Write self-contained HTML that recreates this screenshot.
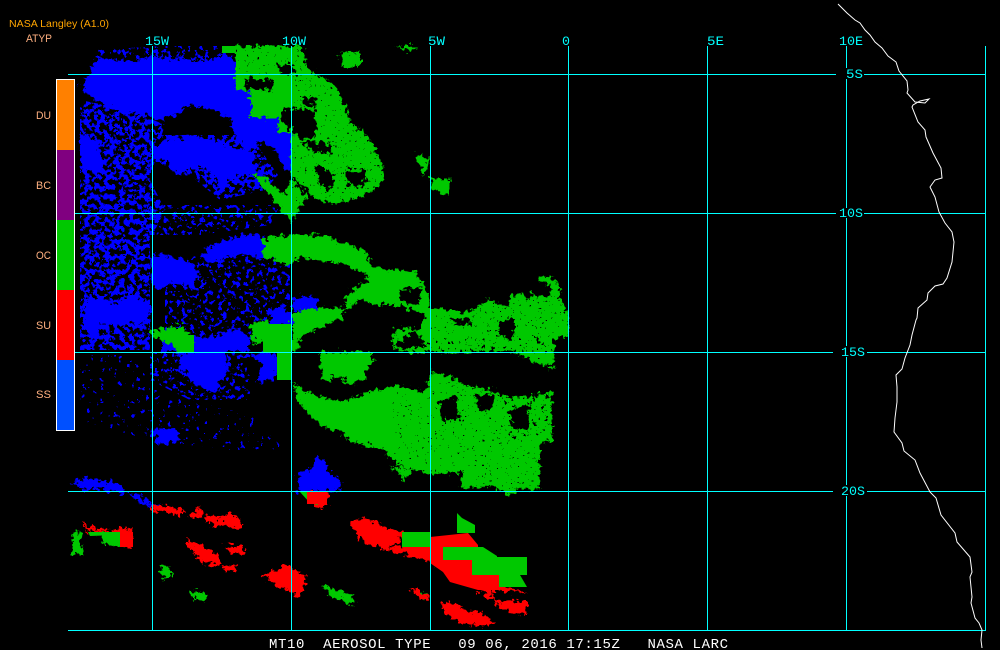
<!DOCTYPE html>
<html>
<head>
<meta charset="utf-8">
<style>
html,body{margin:0;padding:0;background:#000;width:1000px;height:650px;overflow:hidden}
svg{display:block}
text{white-space:pre}
.m{font-family:"Liberation Mono",monospace;font-size:13px;fill:#00ffff}
.l{font-family:"Liberation Sans",sans-serif;font-size:11px;fill:#ffb080}
</style>
</head>
<body>
<svg width="1000" height="650" viewBox="0 0 1000 650" xmlns="http://www.w3.org/2000/svg">
<defs>
<filter id="r" filterUnits="userSpaceOnUse" x="0" y="0" width="1000" height="650" color-interpolation-filters="sRGB">
<feTurbulence type="fractalNoise" baseFrequency=".2" numOctaves="4" seed="3" result="n"/>
<feDisplacementMap in="SourceGraphic" in2="n" scale="12" xChannelSelector="R" yChannelSelector="G"/>
</filter>
<filter id="s" filterUnits="userSpaceOnUse" x="0" y="0" width="1000" height="650" color-interpolation-filters="sRGB">
<feTurbulence type="fractalNoise" baseFrequency=".2" numOctaves="3" seed="7"/>
<feColorMatrix values="0 0 0 0 0 0 0 0 0 0 0 0 0 0 0 1 0 0 0 0"/>
<feComponentTransfer><feFuncA type="discrete" tableValues="0 0 0 0 0 0 0 0 0 0 1 1 1 1 1 1 1 1 1 1"/></feComponentTransfer>
<feComposite in="SourceGraphic" operator="in"/>
</filter>
<filter id="t" filterUnits="userSpaceOnUse" x="0" y="0" width="1000" height="650" color-interpolation-filters="sRGB">
<feTurbulence type="fractalNoise" baseFrequency=".22" numOctaves="3" seed="21"/>
<feColorMatrix values="0 0 0 0 0 0 0 0 0 0 0 0 0 0 0 1 0 0 0 0"/>
<feComponentTransfer><feFuncA type="discrete" tableValues="0 0 0 0 0 0 0 0 0 0 0 0 1 1 1 1 1 1 1 1"/></feComponentTransfer>
<feComposite in="SourceGraphic" operator="in"/>
</filter>
<filter id="u" filterUnits="userSpaceOnUse" x="0" y="0" width="1000" height="650" color-interpolation-filters="sRGB">
<feTurbulence type="fractalNoise" baseFrequency=".22" numOctaves="3" seed="33"/>
<feColorMatrix values="0 0 0 0 0 0 0 0 0 0 0 0 0 0 0 1 0 0 0 0"/>
<feComponentTransfer><feFuncA type="discrete" tableValues="0 0 0 0 0 0 0 0 0 0 0 0 0 0 1 1 1 1 1 1"/></feComponentTransfer>
<feComposite in="SourceGraphic" operator="in"/>
</filter>
<filter id="h" filterUnits="userSpaceOnUse" x="0" y="0" width="1000" height="650" color-interpolation-filters="sRGB">
<feTurbulence type="fractalNoise" baseFrequency=".4" numOctaves="2" seed="11"/>
<feColorMatrix values="0 0 0 0 0 0 0 0 0 0 0 0 0 0 0 1 0 0 0 0"/>
<feComponentTransfer><feFuncA type="discrete" tableValues="0 0 0 0 0 0 0 0 0 0 0 0 0 0 0 1 1 1 1 1"/></feComponentTransfer>
<feComposite in="SourceGraphic" operator="in"/>
</filter>
</defs>

<!-- sparse blue noise -->
<g fill="#0000ff" filter="url(#s)">
<polygon points="80,100 105,105 135,112 165,125 160,140 150,180 165,210 150,240 150,350 80,350"/>
<polygon points="130,135 250,135 278,175 265,190 220,200 190,175 150,160"/>
</g>
<g fill="#0000ff" filter="url(#t)">
<polygon points="195,255 290,255 290,300 270,330 240,345 165,335 165,290"/>
<polygon points="96,50 160,46 222,46 222,62 100,62"/>
<polygon points="155,205 280,205 270,225 200,235 150,235"/>
<polygon points="150,352 250,352 250,400 190,400 150,380"/>
</g>
<g fill="#0000ff" filter="url(#u)">
<polygon points="80,355 130,355 160,395 190,400 250,415 285,450 230,450 150,440 80,420"/>
</g>

<!-- solid blue -->
<g fill="#0000ff" filter="url(#r)">
<polygon points="96,58 135,62 152,56 190,60 215,60 224,50 236,62 238,90 250,90 250,118 278,118 278,132 292,132 292,172 284,172 276,150 262,142 250,150 236,140 232,120 215,110 190,105 170,118 155,120 135,112 118,112 105,105 95,100 85,92 80,85 90,75"/>
<polygon points="168,140 190,136 215,140 233,148 250,150 256,170 270,180 250,172 230,180 222,190 210,170 195,165 180,178 165,160 145,155"/>
<polygon points="80,132 95,140 105,160 100,172 82,170"/>
<polygon points="152,253 170,256 190,262 200,275 192,287 172,283 160,290 150,285"/>
<polygon points="200,258 210,245 228,240 250,233 264,236 264,258 240,254 215,262"/>
<polygon points="84,298 100,298 115,305 130,295 150,305 150,322 120,326 100,322 95,340 84,330"/>
<polygon points="292,298 305,296 318,298 318,310 292,310"/>
<polygon points="270,311 280,306 292,312 292,325 270,325"/>
<polygon points="163,338 175,335 180,352 192,352 190,337 215,336 235,330 250,335 250,352 225,352 228,372 215,392 195,385 182,370 178,352 163,352"/>
<polygon points="250,355 276,352 277,378 258,382 262,365"/>
<polygon points="70,482 85,478 100,480 115,482 125,490 122,494 105,490 85,490"/>
<polygon points="128,492 140,495 150,503 163,505 150,506 140,504"/>
<polygon points="298,472 310,470 316,458 325,460 328,472 342,482 340,490 298,492"/>
<polygon points="150,430 175,428 182,440 160,445"/>
</g>

<!-- green -->
<g fill="#00c800" filter="url(#r)">
<polygon points="236,46 303,46 306,66 316,74 330,82 340,95 350,120 372,142 380,158 384,180 374,190 352,200 332,204 312,196 292,176 292,132 278,132 278,118 250,118 250,90 236,90"/>
<polygon points="250,172 268,180 285,195 292,178 306,198 292,222 285,215 270,195"/>
<polygon points="262,238 292,234 327,236 343,243 363,250 373,265 380,270 373,278 355,270 340,262 322,262 300,258 292,262 286,265 264,256"/>
<polygon points="378,268 415,272 427,290 430,307 463,313 490,300 507,308 510,298 520,293 530,300 540,275 556,280 568,320 568,338 555,338 553,370 530,360 515,352 495,352 430,352 410,352 395,350 392,340 396,328 420,330 425,315 395,305 375,305 360,300 345,310 345,300 350,292 360,285"/>
<polygon points="292,312 310,308 330,307 345,308 343,318 325,325 302,335 295,352 292,352"/>
<polygon points="320,352 372,352 375,362 365,380 350,385 340,382 322,380"/>
<polygon points="292,380 304,392 340,402 365,393 400,385 425,392 432,372 450,376 465,386 490,390 510,398 530,396 552,392 552,440 540,446 540,490 520,488 510,496 490,486 470,488 463,488 460,472 432,474 400,466 380,448 350,442 340,432 320,425 300,405"/>
<polygon points="340,54 360,52 360,66 342,66"/>
<polygon points="396,46 418,46 410,52"/>
<polygon points="416,155 430,158 424,176"/>
<polygon points="430,178 450,178 448,196 434,190"/>
<polygon points="150,328 165,330 182,325 192,342 180,352 165,340 152,336"/>
<polygon points="250,322 268,320 272,340 254,345"/>
<polygon points="416,590 426,592 424,602"/>
<polygon points="72,533 80,530 82,555 72,555"/>
<polygon points="190,590 205,592 206,602 194,600"/>
<polygon points="100,533 125,533 125,547 105,545"/>
<polygon points="322,585 355,595 352,605 328,595"/>
<polygon points="160,565 175,572 165,580"/>
<polygon points="390,465 415,470 405,480"/>
</g>
<g fill="#00c800">
<rect x="222" y="46" width="14" height="7"/>
<rect x="263" y="324" width="29" height="28"/>
<rect x="277" y="352" width="15" height="28"/>
<rect x="180" y="335" width="14" height="17"/>
<rect x="236" y="53" width="14" height="35"/>
</g>

<!-- holes in green -->
<g fill="#000" filter="url(#r)">
<polygon points="278,65 295,65 295,74 280,74"/>
<polygon points="282,108 315,110 317,135 300,140 282,120"/>
<polygon points="302,97 315,98 316,106 304,105"/>
<polygon points="302,142 333,144 332,155 310,150"/>
<polygon points="316,165 324,168 323,178 316,176"/>
<polygon points="345,170 366,170 364,186 348,186"/>
<polygon points="320,166 336,175 330,190 318,182"/>
<polygon points="245,78 272,80 272,90 245,88"/>
<polygon points="400,290 420,288 420,306 400,300"/>
<polygon points="450,318 470,318 472,325 455,326"/>
<polygon points="498,322 515,318 514,338 500,336"/>
<polygon points="530,280 552,285 550,298 535,296"/>
<polygon points="395,345 415,330 425,345 405,350"/>
<polygon points="440,402 455,395 460,420 442,420"/>
<polygon points="475,395 495,395 490,412 478,410"/>
<polygon points="510,410 530,405 528,430 512,428"/>
<polygon points="330,375 345,378 340,388"/>
<polygon points="365,372 375,360 385,385 370,385"/>
</g>
<g fill="#000" filter="url(#h)">
<rect x="236" y="46" width="70" height="28"/>
<rect x="292" y="74" width="95" height="130"/>
<rect x="430" y="275" width="140" height="80"/>
<rect x="392" y="380" width="165" height="115"/>
</g>
<g fill="#000" filter="url(#u)">
<polygon points="500,392 553,392 553,440 500,440"/>
<polygon points="490,335 556,335 556,370 490,370"/>
<polygon points="420,338 490,338 490,352 420,352"/>
</g>

<!-- red -->
<g fill="#ff0000" filter="url(#r)">
<polygon points="350,523 367,518 380,525 402,532 402,540 385,550 370,545 358,538"/>
<polygon points="402,545 445,537 445,570 430,562 402,553 385,550"/>
<polygon points="82,523 92,527 110,530 130,528 133,547 122,545 120,533 90,532"/>
<polygon points="150,505 170,506 185,510 180,517 170,512 150,510"/>
<polygon points="190,514 202,508 200,516 192,518"/>
<polygon points="205,516 225,518 228,510 243,522 240,528 220,526 210,524"/>
<polygon points="187,538 200,545 212,550 222,562 218,566 205,564 195,555 187,545"/>
<polygon points="223,545 242,546 246,555 228,552"/>
<polygon points="223,568 236,565 238,572 226,572"/>
<polygon points="262,575 278,570 282,563 295,570 307,578 300,597 285,590 272,582"/>
<polygon points="308,492 328,492 328,505 318,508 308,502"/>
<polygon points="409,588 420,590 430,598 420,600"/>
<polygon points="440,604 455,602 465,610 480,612 495,622 485,627 458,622 445,614"/>
<polygon points="493,598 505,602 515,600 527,602 527,615 510,612 495,605"/>
<polygon points="473,580 500,585 527,593 490,590 495,602 480,592"/>
</g>
<g fill="#ff0000">
<polygon points="430,537 468,533 478,545 478,575 500,575 500,590 478,590 450,582 443,572 430,563"/>
</g>
<g fill="#00c800">
<rect x="402" y="532" width="28" height="15"/>
<polygon points="457,513 462,518 475,525 475,533 457,533"/>
<rect x="443" y="547" width="40" height="13"/>
<polygon points="462,547 483,547 497,556 497,560 462,560"/>
<rect x="472" y="560" width="55" height="15"/>
<rect x="497" y="557" width="30" height="4"/>
<polygon points="499,575 520,575 527,587 499,587"/>
<polygon points="88,532 120,532 120,545 118,535 90,536"/>
<polygon points="300,492 312,492 318,505 310,503"/>
</g>
<g fill="#ff0000">
<rect x="120" y="532" width="13" height="15"/>
<rect x="307" y="492" width="20" height="12"/>
</g>

<!-- grid -->
<g fill="#00ffff" shape-rendering="crispEdges">
<rect x="68" y="74" width="768" height="1"/><rect x="864" y="74" width="122" height="1"/>
<rect x="68" y="213" width="768" height="1"/><rect x="864" y="213" width="122" height="1"/>
<rect x="68" y="352" width="765" height="1"/><rect x="867" y="352" width="119" height="1"/>
<rect x="68" y="491" width="765" height="1"/><rect x="867" y="491" width="119" height="1"/>
<rect x="68" y="630" width="918" height="1"/>
<rect x="152" y="46" width="1" height="584"/>
<rect x="291" y="46" width="1" height="584"/>
<rect x="430" y="46" width="1" height="584"/>
<rect x="568" y="46" width="1" height="584"/>
<rect x="707" y="46" width="1" height="584"/>
<rect x="846" y="46" width="1" height="22"/><rect x="846" y="79" width="1" height="129"/><rect x="846" y="218" width="1" height="128"/><rect x="846" y="357" width="1" height="128"/><rect x="846" y="496" width="1" height="134"/>
<rect x="985" y="46" width="1" height="585"/>
</g>

<!-- coast -->
<polyline fill="none" stroke="#fff" stroke-width="1" points="838,4 847,13 855,20 860,23 865,30 870,35 875,42 882,48 888,56 896,62 899,71 907,81 908,90 907,93 915,102 925,103 929,99 920,101 913,105 912,107 918,122 925,130 926,137 933,153 941,168 942,178 935,180 930,187 935,197 939,212 945,223 952,232 954,242 952,262 947,278 943,284 935,286 928,293 927,300 918,308 917,318 916,320 912,335 910,345 905,358 902,369 896,375 897,387 897,402 895,418 894,432 902,443 904,451 915,460 920,473 930,492 936,498 941,515 955,533 957,542 970,557 972,572 970,577 972,597 971,603 975,618 979,623 982,630 981,640 982,648"/>

<!-- legend -->
<rect x="56" y="79" width="19" height="352" fill="#fff" shape-rendering="crispEdges"/>
<g shape-rendering="crispEdges">
<rect x="57" y="80" width="17" height="70" fill="#ff8000"/>
<rect x="57" y="150" width="17" height="70" fill="#800080"/>
<rect x="57" y="220" width="17" height="70" fill="#00c800"/>
<rect x="57" y="290" width="17" height="70" fill="#ff0000"/>
<rect x="57" y="360" width="17" height="70" fill="#0050ff"/>
</g>

<text x="9" y="27" font-family="Liberation Sans, sans-serif" font-size="10" fill="#ffa500" textLength="100" lengthAdjust="spacingAndGlyphs">NASA Langley (A1.0)</text>
<text x="26" y="42" class="l" textLength="26" lengthAdjust="spacingAndGlyphs">ATYP</text>
<text x="36" y="119" class="l" textLength="15" lengthAdjust="spacingAndGlyphs">DU</text>
<text x="36" y="189" class="l" textLength="15" lengthAdjust="spacingAndGlyphs">BC</text>
<text x="36" y="259" class="l" textLength="15" lengthAdjust="spacingAndGlyphs">OC</text>
<text x="36" y="329" class="l" textLength="15" lengthAdjust="spacingAndGlyphs">SU</text>
<text x="36" y="398" class="l" textLength="15" lengthAdjust="spacingAndGlyphs">SS</text>

<text x="145" y="45" class="m" textLength="24" lengthAdjust="spacingAndGlyphs">15W</text>
<text x="282" y="45" class="m" textLength="24" lengthAdjust="spacingAndGlyphs">10W</text>
<text x="428" y="45" class="m" textLength="17" lengthAdjust="spacingAndGlyphs">5W</text>
<text x="562" y="45" class="m" textLength="8" lengthAdjust="spacingAndGlyphs">0</text>
<text x="707" y="45" class="m" textLength="17" lengthAdjust="spacingAndGlyphs">5E</text>
<text x="839" y="45" class="m" textLength="24" lengthAdjust="spacingAndGlyphs">10E</text>
<text x="846" y="78" class="m" textLength="17" lengthAdjust="spacingAndGlyphs">5S</text>
<text x="839" y="217" class="m" textLength="24" lengthAdjust="spacingAndGlyphs">10S</text>
<text x="841" y="356" class="m" textLength="24" lengthAdjust="spacingAndGlyphs">15S</text>
<text x="841" y="495" class="m" textLength="24" lengthAdjust="spacingAndGlyphs">20S</text>

<text x="269" y="648" xml:space="preserve" font-family="Liberation Mono, monospace" font-size="14" fill="#fff" textLength="459" lengthAdjust="spacing">MT10  AEROSOL TYPE   09 06, 2016 17:15Z   NASA LARC</text>
</svg>
</body>
</html>
